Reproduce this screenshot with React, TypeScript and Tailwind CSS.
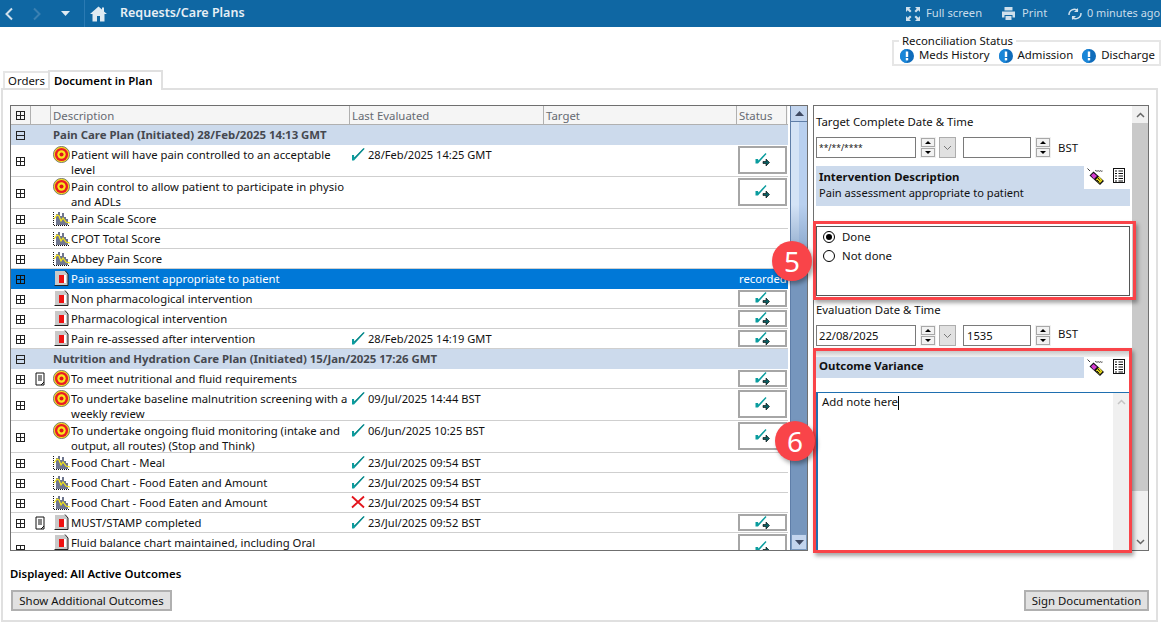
import React from "react";

const font = "font-['Open_Sans','Noto_Sans',sans-serif]";

function Expand({ minus = false, dark = false }: { minus?: boolean; dark?: boolean }) {
  return (
    <svg width="13" height="13" viewBox="0 0 13 13" className="shrink-0">
      <rect x="2.5" y="2.5" width="8" height="8" fill="none" stroke={dark ? "#111" : "#222"} />
      <path d={minus ? "M2.5 6.5h8" : "M2.5 6.5h8M6.5 2.5v8"} stroke={dark ? "#111" : "#222"} fill="none" />
    </svg>
  );
}

function Target() {
  return (
    <svg width="17" height="17" viewBox="0 0 16 16" className="shrink-0">
      <circle cx="8" cy="8" r="7.6" fill="#f5e020" stroke="#666" strokeWidth="0.8" />
      <circle cx="8" cy="8" r="6.2" fill="#ea1c24" />
      <circle cx="8" cy="8" r="3.9" fill="#f7e81c" />
      <circle cx="8" cy="8" r="1.9" fill="#e0141c" />
    </svg>
  );
}

function ChartIcon() {
  return (
    <svg width="17" height="15" viewBox="0 0 17 15" className="shrink-0 mt-[1px]">
      <path d="M0.5 1v13" stroke="#111" strokeDasharray="1 1" fill="none" />
      <path d="M4 3v11M6 1v13M8 5v9M10 2v12M12 6v8M14 8v6" stroke="#101c44" strokeWidth="1.2" fill="none" />
      <path d="M1 8l3-4 2 1 2 5 2-3 3 4 4 1" stroke="#f7e71a" strokeWidth="1.2" fill="none" />
      <path d="M1 14.500h16" stroke="#111" strokeDasharray="1 1" fill="none" />
    </svg>
  );
}

function DocIcon() {
  return (
    <svg width="15" height="16" viewBox="0 0 15 16" className="shrink-0">
      <path d="M1 1h10l3 3v11H1z" fill="#c9c9c9" />
      <path d="M11 0.500l3 3.500V15.500H0.500" fill="none" stroke="#222" />
      <rect x="5" y="5" width="6" height="8" fill="#ee1111" />
      <rect x="10" y="5" width="2" height="8" fill="#fff" />
    </svg>
  );
}

function NoteIcon() {
  return (
    <svg width="11" height="14" viewBox="0 0 11 14" className="shrink-0">
      <path d="M1 1h8v9l-3 3H1z" fill="#fff" stroke="#111" />
      <path d="M3 4h4M3 6h4M3 8h4" stroke="#111" />
      <path d="M9 10v3H6" stroke="#111" fill="none" />
    </svg>
  );
}

function Check() {
  return (
    <svg width="14" height="14" viewBox="0 0 14 14" className="shrink-0">
      <path d="M1 8v5.500h2L13.500 2 12.500 1 3.300 10.500 3 8z" fill="#0a9c9e" />
      <path d="M3.500 11L13 1.500" stroke="#0b6f70" strokeWidth="0.800" fill="none" />
    </svg>
  );
}

function Cross() {
  return (
    <svg width="14" height="14" viewBox="0 0 14 14" className="shrink-0">
      <path d="M1 1.500l12 11M13 1.500l-12 11" fill="none" stroke="#e4141c" strokeWidth="1.800" />
    </svg>
  );
}

function CheckArrow() {
  return (
    <svg width="15" height="14" viewBox="0 0 15 14">
      <path d="M0.500 6v4.500h2.500L11.500 1 10.500 0 3.500 7.500 3 6z" fill="#0a9c9e" />
      <path d="M8 8.500h3V6l3.500 3.500L11 13v-2.500H8z" fill="#0b5f62" stroke="#000" strokeWidth="0.600" />
    </svg>
  );
}

function MagicIcon() {
  return (
    <svg width="18" height="18" viewBox="0 0 18 18" className="shrink-0">
      <path d="M2.500 7.500l4-4L17 13l-4 4z" fill="#111" />
      <path d="M4 7.500l2.500-2.500L10 8l-3 3z" fill="#d43cd0" />
      <path d="M9 11.500l3-3 3.500 4-3 3z" fill="#f2e21a" />
      <path d="M11 10l2 2.500M10 12l2.500 2.500" stroke="#111" />
      <path d="M0.500 0.500L3 3M8 3c1-1.500 1.500 1 2.500 0s1.500 1 2.500 0 1 1 2.500 0" stroke="#222" fill="none" strokeWidth="0.900" />
    </svg>
  );
}

function ListIcon() {
  return (
    <svg width="12" height="15" viewBox="0 0 12 15" className="shrink-0">
      <rect x="0.500" y="0.500" width="11" height="14" fill="#fff" stroke="#111" />
      <path d="M2 3h2M5.500 3H10M2 5.500h2M5.500 5.500H10M2 8h2M5.500 8H10M2 10.500h2M5.500 10.500H10M2 13h2M5.500 13H10" stroke="#111" />
    </svg>
  );
}

function InfoDot() {
  return (
    <svg width="14" height="14" viewBox="0 0 14 14" className="shrink-0 block">
      <circle cx="7" cy="7" r="7" fill="#0f6cbb" />
      <path d="M0 7a7 7 0 0 1 7-7v14a7 7 0 0 1-7-7" fill="#1a86d8" />
      <rect x="5.800" y="2.500" width="2.400" height="5.500" fill="#fff" />
      <rect x="5.800" y="9" width="2.400" height="2.400" fill="#fff" />
    </svg>
  );
}

function SpinButtons() {
  return (
    <div className="flex flex-col gap-[1px] w-[16px] h-[21px] shrink-0 bg-[#f0f0f0] p-[1px]">
      <div className="flex-1 border border-[#a8a8a8] flex items-center justify-center bg-[#f2f2f2]">
        <div className="w-0 h-0 border-l-[3.5px] border-r-[3.5px] border-b-[3.5px] border-l-transparent border-r-transparent border-b-black" />
      </div>
      <div className="flex-1 border border-[#a8a8a8] flex items-center justify-center bg-[#f2f2f2]">
        <div className="w-0 h-0 border-l-[3.5px] border-r-[3.5px] border-t-[3.5px] border-l-transparent border-r-transparent border-t-black" />
      </div>
    </div>
  );
}

function DateRow({ date, time, up = false, masked = false }: { date: string; time: string; up?: boolean; masked?: boolean }) {
  return (
    <div className="flex items-center h-[21px]">
      <div className={`w-[100px] h-[21px] border border-[#7a7a7a] pl-[2px] leading-[19px] text-[#111] bg-white ${masked ? "text-[8.5px]" : "text-[11.2px]"}`}>{date}</div>
      <div className="w-[4px]" />
      <SpinButtons />
      <div className="w-[17px] h-[21px] ml-[3px] border border-[#adadad] bg-[#e1e1e1] flex items-center justify-center">
        <svg width="9" height="6" viewBox="0 0 9 6"><path d="M1 1l3.500 3.500L8 1" fill="none" stroke="#777" /></svg>
      </div>
      <div className="w-[7px]" />
      <div className="w-[68px] h-[21px] border border-[#7a7a7a] pl-[3px] leading-[19px] text-[11.2px] text-[#111] bg-white">{time}</div>
      <div className="w-[4px]" />
      <SpinButtons />
      <div className={`ml-[7px] text-[11.4px] text-[#111] leading-[19px] ${up ? "-mt-[5px]" : ""}`}>BST</div>
    </div>
  );
}

type Row =
  | { kind: "group"; text: string }
  | {
      kind: "row";
      h: number;
      icon: "t" | "c" | "d";
      text: string;
      note?: boolean;
      mark?: "check" | "x";
      date?: string;
      btn?: boolean;
      sel?: boolean;
    };

const rows: Row[] = [
  { kind: "group", text: "Pain Care Plan (Initiated) 28/Feb/2025 14:13 GMT" },
  { kind: "row", h: 32, icon: "t", text: "Patient will have pain controlled to an acceptable level", mark: "check", date: "28/Feb/2025 14:25 GMT", btn: true },
  { kind: "row", h: 32, icon: "t", text: "Pain control to allow patient to participate in physio and ADLs", btn: true },
  { kind: "row", h: 20, icon: "c", text: "Pain Scale Score" },
  { kind: "row", h: 20, icon: "c", text: "CPOT Total Score" },
  { kind: "row", h: 20, icon: "c", text: "Abbey Pain Score" },
  { kind: "row", h: 20, icon: "d", text: "Pain assessment appropriate to patient", sel: true },
  { kind: "row", h: 20, icon: "d", text: "Non pharmacological intervention", btn: true },
  { kind: "row", h: 20, icon: "d", text: "Pharmacological intervention", btn: true },
  { kind: "row", h: 20, icon: "d", text: "Pain re-assessed after intervention", mark: "check", date: "28/Feb/2025 14:19 GMT", btn: true },
  { kind: "group", text: "Nutrition and Hydration Care Plan (Initiated) 15/Jan/2025 17:26 GMT" },
  { kind: "row", h: 20, icon: "t", text: "To meet nutritional and fluid requirements", note: true, btn: true },
  { kind: "row", h: 32, icon: "t", text: "To undertake baseline malnutrition screening with a weekly review", mark: "check", date: "09/Jul/2025 14:44 BST", btn: true },
  { kind: "row", h: 32, icon: "t", text: "To undertake ongoing fluid monitoring (intake and output, all routes) (Stop and Think)", mark: "check", date: "06/Jun/2025 10:25 BST", btn: true },
  { kind: "row", h: 20, icon: "c", text: "Food Chart - Meal", mark: "check", date: "23/Jul/2025 09:54 BST" },
  { kind: "row", h: 20, icon: "c", text: "Food Chart - Food Eaten and Amount", mark: "check", date: "23/Jul/2025 09:54 BST" },
  { kind: "row", h: 20, icon: "c", text: "Food Chart - Food Eaten and Amount", mark: "x", date: "23/Jul/2025 09:54 BST" },
  { kind: "row", h: 20, icon: "d", text: "MUST/STAMP completed", note: true, mark: "check", date: "23/Jul/2025 09:52 BST", btn: true },
  { kind: "row", h: 32, icon: "d", text: "Fluid balance chart maintained, including Oral", btn: true },
];

function TableRow({ row }: { row: Row }) {
  if (row.kind === "group") {
    return (
      <div className="flex items-center h-[20px] bg-[#ccdaec] shrink-0">
        <div className="w-[20px] pl-[3px] flex items-center"><Expand minus /></div>
        <div className="w-[21px]" />
        <div className="pl-[1px] font-bold text-[11.4px] text-[#45484f] whitespace-nowrap">{row.text}</div>
      </div>
    );
  }
  const two = row.h > 20;
  return (
    <div
      className={`flex shrink-0 border-b ${row.sel ? "bg-[#0078d7] text-white border-[#0078d7]" : "bg-white text-[#111] border-[#cfcfcf]"}`}
      style={{ height: row.h }}
    >
      <div className="w-[20px] pl-[3px] pt-[1px] flex items-center"><Expand dark={row.sel} /></div>
      <div className="w-[21px] pl-[4px] pt-[3px]">{row.note ? <NoteIcon /> : null}</div>
      <div className="w-[298px] flex items-start">
        <div className="w-[19px] flex justify-center pt-[1px] shrink-0">
          {row.icon === "t" ? <Target /> : row.icon === "c" ? <ChartIcon /> : <DocIcon />}
        </div>
        <div className="text-[11.3px] leading-[15px] pt-[2px]">{row.text}</div>
      </div>
      <div className="w-[194px] flex items-start pt-[2px] pl-[1px] gap-[3px] text-[11.1px] leading-[15px]">
        {row.mark === "check" ? <Check /> : row.mark === "x" ? <Cross /> : null}
        {row.date ? <span className="whitespace-nowrap text-[#111]">{row.date}</span> : null}
      </div>
      <div className="w-[193px]" />
      <div className="w-[50px] flex items-stretch">
        {row.btn ? (
          <div className={`w-[49px] ml-[1px] flex items-center justify-center border-2 border-[#a6a6a6] bg-white mt-[1px] ${two ? "mb-[2px]" : "mb-[1px]"}`}>
            <CheckArrow />
          </div>
        ) : row.sel ? (
          <div className="pl-[2px] text-[11.3px] leading-[20px] whitespace-nowrap">recorded</div>
        ) : null}
      </div>
    </div>
  );
}

function Btn({ children, cls }: { children: React.ReactNode; cls: string }) {
  return (
    <div className={`h-[21px] border-2 border-[#b0b0b0] bg-[#e1e1e1] text-[11.4px] leading-[17px] text-[#111] text-center whitespace-nowrap ${cls}`}>{children}</div>
  );
}

function Arrow({ up }: { up: boolean }) {
  return (
    <svg width="11" height="7" viewBox="0 0 11 7">
      <path d={up ? "M1 6l4.500-5L10 6z" : "M1 1l4.500 5L10 1z"} fill="#3f4a63" />
    </svg>
  );
}

export default function App() {
  return (
    <div className={`relative w-[1161px] h-[626px] bg-white overflow-hidden ${font}`}>
      {/* Top bar */}
      <div className="h-[27px] bg-[#0f67a3] flex items-center text-white">
        <div className="w-[85px] h-full flex items-center border-r border-[#2a7ab3] shrink-0">
          <svg width="10" height="14" viewBox="0 0 10 14" className="ml-[4px]"><path d="M8 1.500L2.500 7 8 12.500" fill="none" stroke="#cfe0ec" strokeWidth="2" /></svg>
          <svg width="10" height="14" viewBox="0 0 10 14" className="ml-[18px]"><path d="M2 1.500L7.500 7 2 12.500" fill="none" stroke="#3a80b2" strokeWidth="2" /></svg>
          <svg width="9" height="5" viewBox="0 0 9 5" className="ml-[19px]"><path d="M0 0h9L4.500 5z" fill="#dfeaf2" /></svg>
        </div>
        <svg width="17" height="16" viewBox="0 0 17 16" className="ml-[5px] shrink-0">
          <path d="M8.500 0.500L12 3.600V1.500h2v3.900L17 8h-2.500v7.500H10V10H7v5.500H2.500V8H0z" fill="#dfeaf2" />
        </svg>
        <div className="ml-[13px] text-[12.500px] font-semibold whitespace-nowrap text-[#e6eff5]">Requests/Care Plans</div>
        <div className="flex-1" />
        <svg width="16" height="16" viewBox="0 0 16 16" className="shrink-0">
          <path d="M1 1h5L4.300 2.700 6.500 5 5 6.500 2.700 4.300 1 6zM15 1v5l-1.700-1.700L11 6.500 9.500 5l2.200-2.300L10 1zM1 15v-5l1.700 1.700L5 9.500 6.500 11l-2.200 2.300L6 15zM15 15h-5l1.700-1.700L9.500 11 11 9.500l2.300 2.200L15 10z" fill="#cfe0ec" />
        </svg>
        <div className="ml-[5px] w-[56px] text-[11.2px] text-[#c8dcea] whitespace-nowrap">Full screen</div>
        <svg width="15" height="15" viewBox="0 0 15 15" className="ml-[19px] shrink-0">
          <path d="M3.500 1h8v3.500h-8zM1 5.500h13v6h-2.500V9h-8v2.500H1zM4.500 10h6v4h-6z" fill="#cfe0ec" />
        </svg>
        <div className="ml-[6px] w-[26px] text-[11.2px] text-[#c8dcea] whitespace-nowrap">Print</div>
        <svg width="16" height="14" viewBox="0 0 16 14" className="ml-[19px] shrink-0">
          <path d="M2 8a5.500 5.500 0 0 1 9-4.500M14 6a5.500 5.500 0 0 1-9 4.500" fill="none" stroke="#cfe0ec" strokeWidth="1.500" />
          <path d="M11 1v4h-4zM5 13V9h4z" fill="#cfe0ec" />
        </svg>
        <div className="ml-[4px] w-[74px] text-[10.9px] text-[#c8dcea] whitespace-nowrap">0 minutes ago</div>
      </div>

      {/* Reconciliation */}
      <div className="flex justify-end h-[43px] pt-[13px]">
        <div className="relative w-[269px] h-[26px] border-2 border-[#e6e6e6] flex items-end pb-[1px] pl-[6px] text-[11.4px] leading-[16px] text-[#111] whitespace-nowrap">
          <div className="absolute left-[5px] top-[-8px] bg-white px-[3px] leading-[14px]">Reconciliation Status</div>
          <InfoDot />
          <span className="ml-[5px]">Meds History</span>
          <span className="ml-[9px]"><InfoDot /></span>
          <span className="ml-[5px]">Admission</span>
          <span className="ml-[9px]"><InfoDot /></span>
          <span className="ml-[5px]">Discharge</span>
        </div>
      </div>

      {/* Tabs */}
      <div className="flex items-end h-[18px] pl-[3px]">
        <div className="h-[17px] w-[45px] border-t-2 border-l-2 border-[#e6e6e6] text-[11.4px] leading-[15px] text-center text-[#111] shrink-0">Orders</div>
        <div className="h-[20px] -mt-[2px] pl-[4px] w-[115px] border-t-2 border-x-2 border-[#e0e0e0] bg-white font-semibold text-[11.4px] leading-[17px] text-black relative z-10 -mb-[2px] whitespace-nowrap shrink-0">Document in Plan</div>
      </div>

      {/* Panel */}
      <div className="h-[534px] w-[1157px] ml-[1px] border-2 border-[#e0e0e0] pt-[15px] pl-[7px] flex flex-col">
        <div className="flex h-[446px] gap-[5px] shrink-0">
          {/* Table */}
          <div className="w-[798px] h-[446px] border border-[#6f6f6f] flex shrink-0">
            <div className="w-[777px] flex flex-col overflow-hidden">
              <div className="flex h-[19px] shrink-0 bg-[#f5f5f5] text-[11.4px] leading-[20px] text-[#666a72] border-b border-[#b0b0b0]">
                <div className="w-[20px] pl-[3px] flex items-center border-r border-[#b0b0b0]"><Expand /></div>
                <div className="w-[20px] border-r border-[#b0b0b0]" />
                <div className="w-[299px] pl-[2px] border-r border-[#b0b0b0]">Description</div>
                <div className="w-[194px] pl-[2px] border-r border-[#b0b0b0]">Last Evaluated</div>
                <div className="w-[193px] pl-[2px] border-r border-[#b0b0b0]">Target</div>
                <div className="w-[50px] pl-[2px] border-r border-[#b0b0b0]">Status</div>
              </div>
              <div className="flex flex-col">
                {rows.map((r, i) => <TableRow key={i} row={r} />)}
              </div>
            </div>
            <div className="w-[2px] bg-white" />
            <div className="w-[17px] border-l border-[#5f7ea8] flex flex-col bg-[#7696bd]">
              <div className="h-[16px] bg-[#c3d5ee] border-b border-[#5f7ea8] flex items-center justify-center shrink-0"><Arrow up /></div>
              <div className="h-[150px] flex shrink-0">
                <div className="w-[8px] bg-[linear-gradient(180deg,#d4e3f6,#d4e3f6_55%,#7696bd)]" />
                <div className="flex-1 bg-[linear-gradient(180deg,#b9d0ef,#b9d0ef_55%,#7696bd)]" />
              </div>
              <div className="flex-1" />
              <div className="h-[16px] bg-[#c3d5ee] border border-[#7a9ac0] flex items-center justify-center shrink-0"><Arrow up={false} /></div>
            </div>
          </div>

          {/* Right panel */}
          <div className="w-[336px] h-[446px] border border-[#6f6f6f] flex shrink-0">
            <div className="w-[318px] pl-[2px] flex flex-col text-[11.4px] text-[#111]">
              <div className="h-[31px] pt-[8px] leading-[16px] shrink-0">Target Complete Date &amp; Time</div>
              <DateRow date="**/**/****" time="" masked />
              <div className="relative mt-[8px] h-[40px] w-[314px] shrink-0">
                <div className="absolute inset-0 bg-[#ccdaec] pl-[3px] pt-[3px] leading-[16px]">
                  <div className="font-bold">Intervention Description</div>
                  <div className="text-[11.1px]">Pain assessment appropriate to patient</div>
                </div>
                <div className="absolute right-0 top-0 w-[46px] h-[23px] bg-white flex items-start pt-[2px] gap-[8px] pl-[3px]">
                  <MagicIcon />
                  <ListIcon />
                </div>
              </div>
              <div className="mt-[20px] h-[70px] border border-[#555] w-[314px] pl-[6px] shrink-0">
                <div className="flex items-center h-[19px] gap-[7px]">
                  <span className="w-[12px] h-[12px] rounded-full border border-black flex items-center justify-center"><span className="w-[6px] h-[6px] rounded-full bg-black" /></span>
                  Done
                </div>
                <div className="flex items-center h-[19px] gap-[7px]">
                  <span className="w-[12px] h-[12px] rounded-full border border-black" />
                  Not done
                </div>
              </div>
              <div className="h-[29px] pt-[6px] leading-[16px] shrink-0">Evaluation Date &amp; Time</div>
              <DateRow date="22/08/2025" time="1535" up />
              <div className="mt-[5px] h-[6px] w-[314px] bg-[linear-gradient(180deg,#c8c8c8,#f2f2f2)] shrink-0" />
              <div className="relative h-[21px] w-[314px] shrink-0">
                <div className="w-[268px] h-[21px] bg-[#ccdaec] pl-[3px] font-bold leading-[18px]">Outcome Variance</div>
                <div className="absolute right-0 top-0 flex items-start gap-[8px] w-[46px] pl-[3px] pt-[2px]">
                  <MagicIcon />
                  <ListIcon />
                </div>
              </div>
              <div className="mt-[14px] flex-1 border-l-2 border-t border-[#1f6fb0] flex w-[314px]">
                <div className="flex-1 pl-[4px] pt-[1px] leading-[16px]">
                  <span>Add note here</span><span className="inline-block w-[1px] h-[14px] bg-black align-middle" />
                </div>
                <div className="w-[17px] bg-[#f0f0f0] flex justify-center pt-[6px]">
                  <svg width="9" height="6" viewBox="0 0 9 6"><path d="M1 5l3.500-3.500L8 5" fill="none" stroke="#c4c4c4" strokeWidth="1.500" /></svg>
                </div>
              </div>
            </div>
            <div className="w-[16px] flex flex-col bg-[#f0f0f0]">
              <div className="h-[17px] flex items-center justify-center shrink-0">
                <svg width="9" height="6" viewBox="0 0 9 6"><path d="M1 5l3.500-3.500L8 5" fill="none" stroke="#666" strokeWidth="1.500" /></svg>
              </div>
              <div className="h-[368px] bg-[#c9c9c9] shrink-0" />
              <div className="flex-1" />
              <div className="h-[17px] flex items-center justify-center shrink-0">
                <svg width="9" height="6" viewBox="0 0 9 6"><path d="M1 1l3.500 3.500L8 1" fill="none" stroke="#666" strokeWidth="1.500" /></svg>
              </div>
            </div>
          </div>
        </div>

        <div className="mt-[15px] text-[11.4px] font-semibold text-black leading-[16px] whitespace-nowrap">Displayed: All Active Outcomes</div>
        <div className="mt-[8px] flex justify-between pr-[7px] pl-[1px]">
          <Btn cls="w-[161px]">Show Additional Outcomes</Btn>
          <Btn cls="w-[125px]">Sign Documentation</Btn>
        </div>
      </div>

      {/* Annotation overlays */}
      <div className="absolute left-[813px] top-[221px] w-[323px] h-[79px] border-[3px] border-[#f94449] shadow-[2px_3px_4px_rgba(0,0,0,0.35)]" />
      <div className="absolute left-[813px] top-[348px] w-[319px] h-[205px] border-[3px] border-[#f94449] shadow-[2px_3px_4px_rgba(0,0,0,0.35)]" />
      <div className="absolute left-[772px] top-[241px] w-[40px] h-[40px] rounded-full bg-[#f94449] text-white text-[28px] leading-[40px] text-center font-['Liberation_Sans',sans-serif] shadow-[2px_3px_4px_rgba(0,0,0,0.35)]">5</div>
      <div className="absolute left-[775px] top-[421px] w-[40px] h-[40px] rounded-full bg-[#f94449] text-white text-[28px] leading-[40px] text-center font-['Liberation_Sans',sans-serif] shadow-[2px_3px_4px_rgba(0,0,0,0.35)]">6</div>
    </div>
  );
}
